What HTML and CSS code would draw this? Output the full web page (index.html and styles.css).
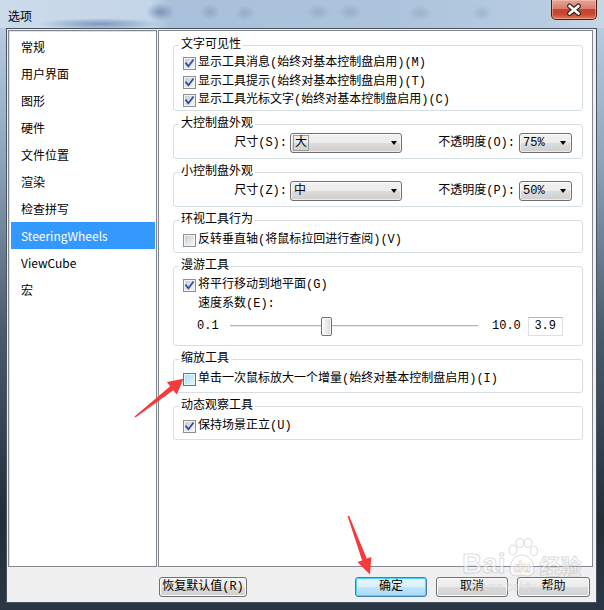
FILE: index.html
```html
<!DOCTYPE html>
<html lang="zh-CN">
<head>
<meta charset="utf-8">
<title>选项</title>
<link rel="stylesheet" href="styles.css">
</head>
<body>
<div class="screen">
  <header class="titlebar">
    <span class="title">选项</span>
    <button class="close" aria-label="关闭">
      <svg width="44" height="19" viewBox="0 0 44 19"><path d="M17.5 6 L26.5 13.5 M26.5 6 L17.5 13.5" stroke="#3b2420" stroke-width="5" stroke-linecap="round"/><path d="M17.5 6 L26.5 13.5 M26.5 6 L17.5 13.5" stroke="#ffffff" stroke-width="2.6" stroke-linecap="round"/></svg>
    </button>
  </header>

  <div class="client">
    <div class="main">
      <ul class="nav">
        <li>常规</li>
        <li>用户界面</li>
        <li>图形</li>
        <li>硬件</li>
        <li>文件位置</li>
        <li>渲染</li>
        <li>检查拼写</li>
        <li class="sel">SteeringWheels</li>
        <li>ViewCube</li>
        <li>宏</li>
      </ul>

      <div class="pane">
        <fieldset class="grp g1">
          <legend>文字可见性</legend>
          <div class="row"><span class="cb on"><svg viewBox="0 0 11 11"><path d="M2 5.3 L4.4 8.2 L9 2.2"/></svg></span>显示工具消息(始终对基本控制盘启用)(M)</div>
          <div class="row"><span class="cb on"><svg viewBox="0 0 11 11"><path d="M2 5.3 L4.4 8.2 L9 2.2"/></svg></span>显示工具提示(始终对基本控制盘启用)(T)</div>
          <div class="row"><span class="cb on"><svg viewBox="0 0 11 11"><path d="M2 5.3 L4.4 8.2 L9 2.2"/></svg></span>显示工具光标文字(始终对基本控制盘启用)(C)</div>
        </fieldset>

        <fieldset class="grp g2">
          <legend>大控制盘外观</legend>
          <div class="row combo-row">
            <span class="lbl1">尺寸(S):</span>
            <span class="combo big focus"><span class="val">大</span><span class="arrow"></span></span>
            <span class="lbl2">不透明度(O):</span>
            <span class="combo small"><span class="val">75%</span><span class="arrow"></span></span>
          </div>
        </fieldset>

        <fieldset class="grp g2">
          <legend>小控制盘外观</legend>
          <div class="row combo-row">
            <span class="lbl1">尺寸(Z):</span>
            <span class="combo big"><span class="val">中</span><span class="arrow"></span></span>
            <span class="lbl2">不透明度(P):</span>
            <span class="combo small"><span class="val">50%</span><span class="arrow"></span></span>
          </div>
        </fieldset>

        <fieldset class="grp g4">
          <legend>环视工具行为</legend>
          <div class="row"><span class="cb"></span>反转垂直轴(将鼠标拉回进行查阅)(V)</div>
        </fieldset>

        <fieldset class="grp g5">
          <legend>漫游工具</legend>
          <div class="row"><span class="cb on"><svg viewBox="0 0 11 11"><path d="M2 5.3 L4.4 8.2 L9 2.2"/></svg></span>将平行移动到地平面(G)</div>
          <div class="row indent">速度系数(E):</div>
          <div class="row slider-row">
            <span class="num1">0.1</span>
            <span class="track"><span class="thumb"></span></span>
            <span class="num2">10.0</span>
            <span class="tbox">3.9</span>
          </div>
        </fieldset>

        <fieldset class="grp g6">
          <legend>缩放工具</legend>
          <div class="row"><span class="cb hover"></span>单击一次鼠标放大一个增量(始终对基本控制盘启用)(I)</div>
        </fieldset>

        <fieldset class="grp g6">
          <legend>动态观察工具</legend>
          <div class="row"><span class="cb on"><svg viewBox="0 0 11 11"><path d="M2 5.3 L4.4 8.2 L9 2.2"/></svg></span>保持场景正立(U)</div>
        </fieldset>
      </div>
    </div>

    <div class="actions">
      <button class="btn reset">恢复默认值(R)</button>
      <button class="btn ok">确定</button>
      <button class="btn cancel">取消</button>
      <button class="btn help">帮助</button>
    </div>
  </div>

  <div class="watermark" aria-hidden="true">
    <div class="wm-logo">
      <span class="wm-bai">Bai</span>
      <svg class="wm-paw" width="32" height="40" viewBox="0 0 32 40">
        <g fill="rgba(255,255,255,0.5)" stroke="rgba(150,150,150,0.35)" stroke-width="1">
          <ellipse cx="7" cy="12" rx="4" ry="5"/>
          <ellipse cx="14" cy="5" rx="4" ry="4.5"/>
          <ellipse cx="22" cy="5" rx="4" ry="4.5"/>
          <ellipse cx="28" cy="13" rx="3.5" ry="5"/>
          <path d="M4 32 C4 22 10 17 16 17 C22 17 28 22 28 32 C28 38 22 39 16 37 C10 39 4 38 4 32 Z"/>
        </g>
        <text x="16" y="34" text-anchor="middle" font-family="Liberation Sans" font-weight="bold" font-size="14" fill="rgba(255,255,255,0.5)" stroke="rgba(150,150,150,0.35)" stroke-width="0.8">du</text>
      </svg>
      <span class="wm-jy">经验</span>
    </div>
    <div class="wm-url">jingyan.baidu.com</div>
  </div>

  <svg class="annot" width="604" height="610" viewBox="0 0 604 610" aria-hidden="true">
    <polygon fill="#f43a3a" points="183.5,378.8 166.8,382.0 170.2,386.3 134.5,416.4 135.5,417.6 173.4,390.2 176.8,394.4"/>
    <polygon fill="#f43a3a" points="370,574.5 357.4,562.1 362.1,560.4 347.6,516.3 349.1,515.7 366.7,558.6 371.4,556.9"/>
  </svg>
</div>
</body>
</html>
```

FILE: styles.css
```css
* { box-sizing: border-box; }

html, body {
  margin: 0;
  padding: 0;
}

body {
  width: 604px;
  height: 610px;
  overflow: hidden;
  font-family: "Liberation Mono", "Noto Sans CJK SC", monospace;
  font-size: 12px;
  color: #000;
}

.screen {
  position: relative;
  width: 604px;
  height: 610px;
  display: flex;
  flex-direction: column;
  background: linear-gradient(to bottom, #c1d4e8 0px, #b3c8de 40px, #8ea4bb 160px, #4b5b6c 330px, #232d38 520px, #2b3744 610px);
}

/* ---------- title bar ---------- */
.titlebar {
  height: 28px;
  flex: none;
  display: flex;
  justify-content: space-between;
  align-items: flex-start;
  background:
    radial-gradient(62px 6px at 100px 24px, rgba(60,100,155,0.55), rgba(60,100,155,0)),
    radial-gradient(14px 9px at 160px 12px, rgba(50,80,130,0.45), rgba(50,80,130,0)),
    radial-gradient(10px 8px at 210px 12px, rgba(90,110,140,0.3), rgba(90,110,140,0)),
    radial-gradient(10px 8px at 245px 13px, rgba(90,110,140,0.25), rgba(90,110,140,0)),
    radial-gradient(12px 8px at 318px 12px, rgba(90,110,140,0.25), rgba(90,110,140,0)),
    radial-gradient(12px 8px at 350px 12px, rgba(90,110,140,0.25), rgba(90,110,140,0)),
    radial-gradient(12px 8px at 420px 13px, rgba(90,110,140,0.22), rgba(90,110,140,0)),
    radial-gradient(10px 8px at 482px 13px, rgba(90,110,140,0.22), rgba(90,110,140,0)),
    linear-gradient(to right, #ccdbea 0, #c4d5e8 150px, #a8c0da 170px, #adc4dc 400px, #b7cce1 540px, #c8d6e4 604px);
}

.title {
  font-family: "Noto Sans CJK SC", sans-serif;
  font-size: 12px;
  line-height: 16px;
  padding: 8px 0 0 8px;
  color: #000;
}

.close {
  width: 46px;
  height: 20px;
  margin-right: 7px;
  padding: 0;
  display: flex;
  align-items: center;
  justify-content: center;
  border: 1px solid #4e1b12;
  border-top: none;
  border-radius: 0 0 5px 5px;
  background: linear-gradient(to bottom, #e6a596 0%, #d77e6c 45%, #c5432f 50%, #c8482f 75%, #e27a56 100%);
  box-shadow: inset 0 0 0 1px rgba(255, 210, 200, 0.45);
}

/* ---------- client area ---------- */
.client {
  flex: none;
  margin-left: 6px;
  width: 591px;
  height: 575px;
  border: 1px solid #47535f;
  background: #f0f0f0;
  padding: 1px 0 0 1px;
  display: flex;
  flex-direction: column;
}

.main {
  display: flex;
  height: 537px;
  flex: none;
}

.nav {
  width: 149px;
  height: 537px;
  margin: 0;
  padding: 2px 0 0 2px;
  list-style: none;
  background: #fff;
  border: 1px solid #828790;
  box-shadow: inset 1px 1px 0 #e3e3e3;
}

.nav li {
  width: 144px;
  height: 27px;
  padding-left: 10px;
  line-height: 27px;
  font-family: "Noto Sans CJK SC", sans-serif;
  font-size: 12px;
  color: #000;
  white-space: nowrap;
}

.nav li.sel {
  background: #3399ff;
  color: #fff;
}

.pane {
  width: 435px;
  height: 537px;
  margin-left: 1px;
  background: #fff;
  border: 1px solid #828790;
  padding: 7px 9px 0 14px;
}

/* ---------- group boxes ---------- */
.grp {
  margin: 0 0 6px 0;
  min-width: 0;
  border: 1px solid #d5dfe5;
  border-radius: 3px;
  padding: 0 0 0 9px;
}

.grp legend {
  padding: 0 2px;
  margin-left: -4px;
  line-height: 15px;
  font-size: 12px;
}

.row {
  display: flex;
  align-items: center;
  height: 19px;
  line-height: 19px;
  white-space: nowrap;
}

.g1 { padding-top: 1px; padding-bottom: 0; }
.g1 .row { height: 18.7px; }

.g2 { padding-top: 1px; padding-bottom: 5px; }
.g2 .row { height: 20px; }

.g4 { padding-top: 3px; padding-bottom: 2px; }

.g5 { padding-top: 2px; padding-bottom: 7px; }

.g6 { padding-top: 3px; padding-bottom: 3px; }

.indent { padding-left: 15px; }

/* ---------- checkbox ---------- */
.cb {
  flex: none;
  width: 13px;
  height: 13px;
  margin-right: 2px;
  border: 1px solid #8e8f8f;
  background: linear-gradient(135deg, #c4c8ce 0%, #e4e6e8 55%, #f8f8f8 100%);
  box-shadow: inset 0 0 0 1px #f4f4f4;
  display: flex;
}

.cb svg {
  width: 11px;
  height: 11px;
}

.cb svg path {
  fill: none;
  stroke: #2f4f9e;
  stroke-width: 1.8;
  stroke-linecap: square;
}

.cb.hover {
  border-color: #3c7fb1;
  background: linear-gradient(135deg, #a9d9f6 0%, #cde9fb 55%, #eaf6fe 100%);
  box-shadow: inset 0 0 0 1px #def9fa;
}

/* ---------- combo boxes ---------- */
.lbl1 {
  width: 104px;
  margin-right: 3px;
  text-align: right;
}

.lbl2 {
  width: 113px;
  margin-right: 4px;
  text-align: right;
}

.combo {
  height: 20px;
  border: 1px solid #707070;
  border-radius: 3px;
  background: linear-gradient(to bottom, #f2f2f2 0%, #ebebeb 50%, #dddddd 50%, #cfcfcf 100%);
  box-shadow: inset 0 0 0 1px rgba(255,255,255,0.6);
  display: flex;
  align-items: center;
  justify-content: space-between;
  padding: 0 4px 0 3px;
  line-height: 18px;
}

.combo.big { width: 112px; }
.combo.small { width: 53px; padding-right: 5px; }

.combo.focus .val {
  padding: 0 1px;
  border: 1px solid #9a9a9a;
  line-height: 14px;
  margin-left: -1px;
}

.arrow {
  width: 0;
  height: 0;
  border-left: 3.5px solid transparent;
  border-right: 3.5px solid transparent;
  border-top: 4px solid #000;
}

/* ---------- slider ---------- */
.slider-row { height: 24px; }

.num1 {
  width: 33px;
  margin-left: 14px;
}

.track {
  width: 248px;
  height: 24px;
  display: flex;
  align-items: center;
  background: linear-gradient(to bottom, transparent 11px, #b5b5b5 11px, #b5b5b5 12px, #e9e9e9 12px, #e9e9e9 13px, transparent 13px);
}

.thumb {
  width: 11px;
  height: 19px;
  margin-left: 91px;
  border: 1px solid #707070;
  border-radius: 2px;
  background: linear-gradient(to right, #fbfbfb 0%, #ececec 50%, #d8d8d8 100%);
  box-shadow: inset 0 0 0 1px rgba(255,255,255,0.7);
}

.num2 {
  width: 36px;
  margin-left: 14px;
}

.tbox {
  width: 35px;
  height: 19px;
  line-height: 17px;
  border: 1px solid #dbdfe6;
  border-top-color: #b5b8bd;
  background: #fff;
  text-align: right;
  padding-right: 6px;
}

/* ---------- buttons ---------- */
.actions {
  display: flex;
  padding: 10px 6px 0 151px;
}

.btn {
  height: 20px;
  padding: 0;
  font-family: "Liberation Mono", "Noto Sans CJK SC", monospace;
  font-size: 12px;
  line-height: 18px;
  color: #000;
  border: 1px solid #707070;
  border-radius: 3px;
  background: linear-gradient(to bottom, #f2f2f2 0%, #ebebeb 50%, #dddddd 50%, #cfcfcf 100%);
  box-shadow: inset 0 0 0 1px #fcfcfc;
}

.btn.reset { width: 88px; margin-right: auto; }
.btn.ok { width: 72px; margin-right: 9px; }
.btn.cancel { width: 72px; margin-right: 9px; }
.btn.help { width: 73px; }

.btn.ok {
  border-color: #3c7fb1;
  background: linear-gradient(to bottom, #eaf6fd 0%, #d9f0fc 50%, #bee6fd 50%, #a7d9f5 100%);
  box-shadow: inset 0 0 0 1px #48d6fd;
}

/* ---------- overlays ---------- */
.watermark {
  position: absolute;
  left: 462px;
  top: 520px;
  pointer-events: none;
}

.wm-logo {
  display: flex;
  align-items: flex-end;
  height: 60px;
}

.wm-bai,
.wm-jy {
  font-family: "Liberation Sans", "Noto Sans CJK SC", sans-serif;
  font-weight: bold;
  color: rgba(255, 255, 255, 0.5);
  -webkit-text-stroke: 1px rgba(150, 150, 150, 0.35);
  line-height: 1;
}

.wm-bai { font-size: 28px; margin-bottom: 2px; }
.wm-jy { font-size: 21px; margin-bottom: 3px; margin-left: 2px; }
.wm-paw { margin-bottom: 2px; }

.wm-url {
  font-family: "Liberation Sans", sans-serif;
  font-size: 12px;
  line-height: 14px;
  color: rgba(255, 255, 255, 0.45);
  -webkit-text-stroke: 0.5px rgba(150, 150, 150, 0.3);
  margin-left: 3px;
}

.annot {
  position: absolute;
  left: 0;
  top: 0;
  pointer-events: none;
}
```
